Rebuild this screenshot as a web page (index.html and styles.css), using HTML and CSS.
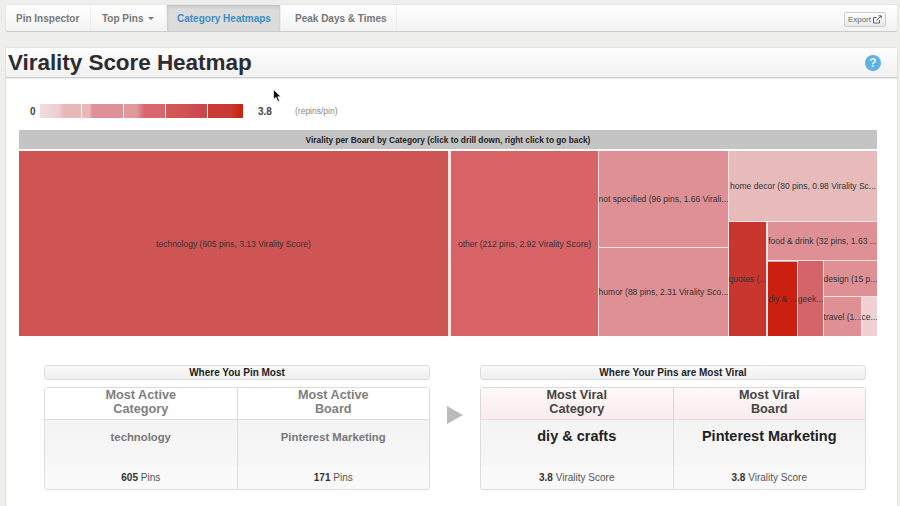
FILE: index.html
```html
<!DOCTYPE html>
<html lang="en">
<head>
  <meta charset="UTF-8" />
  <title>Virality Score Heatmap</title>
  <link rel="stylesheet" href="styles.css">
</head>
<body>
  <nav class="navbar">
    <a class="tab t-pin">Pin Inspector</a>
    <a class="tab t-top">Top Pins <span class="caret"></span></a>
    <a class="tab t-cat active">Category Heatmaps</a>
    <a class="tab t-peak">Peak Days &amp; Times</a>
    <button class="export">Export
      <svg width="9" height="9" viewBox="0 0 9 9" fill="none" stroke="#666" stroke-width="1">
        <path d="M6.500 5v3h-6V2.500h3" />
        <path d="M3.500 5.500L8 1M5.500 .8H8.300V3.500" />
      </svg>
    </button>
  </nav>

  <main class="panel">
    <header class="panel-head">
      <h1>Virality Score Heatmap</h1>
      <span class="help">?</span>
    </header>

    <div class="legend">
      <b class="legend-min">0</b>
      <div class="scale">
        <i class="s1"></i><i class="s2"></i><i class="s3"></i><i class="s4"></i><i class="s5"></i>
      </div>
      <b class="legend-max">3.8</b>
      <span class="legend-unit">(repins/pin)</span>
    </div>

    <div class="map-title">Virality per Board by Category (click to drill down, right click to go back)</div>

    <div class="treemap">
      <div class="cell c-tech">technology (605 pins, 3.13 Virality Score)</div>
      <div class="cell c-other">other (212 pins, 2.92 Virality Score)</div>
      <div class="col col-3">
        <div class="cell c-pale c-ns">not specified (96 pins, 1.66 Virali...</div>
        <div class="cell c-pale c-humor">humor (88 pins, 2.31 Virality Sco...</div>
      </div>
      <div class="col col-4">
        <div class="cell c-home">home decor (80 pins, 0.98 Virality Sc...</div>
        <div class="row r-lower">
          <div class="cell c-quotes">quotes (...</div>
          <div class="col col-5">
            <div class="cell c-pale c-food">food &amp; drink (32 pins, 1.63 ...</div>
            <div class="row r-small">
              <div class="cell c-diy">diy &amp; ...</div>
              <div class="cell c-geek">geek...</div>
              <div class="col col-6">
                <div class="cell c-pale c-design">design (15 p...</div>
                <div class="row r-tiny">
                  <div class="cell c-pale c-travel">travel (1...</div>
                  <div class="cell c-ce">ce...</div>
                </div>
              </div>
            </div>
          </div>
        </div>
      </div>
    </div>

    <div class="summary">
      <section class="group">
        <div class="group-title">Where You Pin Most</div>
        <div class="stats muted">
          <div class="stat">
            <div class="stat-head">Most Active<br>Category</div>
            <div class="stat-name">technology</div>
            <div class="stat-foot"><b>605</b> Pins</div>
          </div>
          <div class="stat">
            <div class="stat-head">Most Active<br>Board</div>
            <div class="stat-name">Pinterest Marketing</div>
            <div class="stat-foot"><b>171</b> Pins</div>
          </div>
        </div>
      </section>
      <div class="arrow"></div>
      <section class="group">
        <div class="group-title">Where Your Pins are Most Viral</div>
        <div class="stats viral">
          <div class="stat">
            <div class="stat-head">Most Viral<br>Category</div>
            <div class="stat-name">diy &amp; crafts</div>
            <div class="stat-foot"><b>3.8</b> Virality Score</div>
          </div>
          <div class="stat">
            <div class="stat-head">Most Viral<br>Board</div>
            <div class="stat-name">Pinterest Marketing</div>
            <div class="stat-foot"><b>3.8</b> Virality Score</div>
          </div>
        </div>
      </section>
    </div>
  </main>

  <svg class="cursor" width="9" height="14" viewBox="0 0 9 14">
    <path d="M.5 .5V10.500L3 8.300L4.800 12.500L6.500 11.700L4.800 7.800H8Z" fill="#111" stroke="#fff" stroke-width=".7" />
  </svg>
</body>
</html>
```

FILE: styles.css
```css
* {
  box-sizing: border-box;
}
html,
body {
  height: 506px;
  overflow: hidden;
}
body {
  margin: 0;
  padding: 4px 2px 0 5px;
  background-color: #eeeeec;
  font-family: "Liberation Sans", Arial, sans-serif;
  color: #333;
  position: relative;
}

/* top nav */
.navbar {
  display: flex;
  align-items: stretch;
  height: 28px;
  background: linear-gradient(#fff, #f2f2f2);
  border: 1px solid #e6e6e6;
  border-bottom-color: #ccc;
  border-radius: 3px;
}
.tab {
  display: flex;
  align-items: center;
  font-size: 10px;
  font-weight: bold;
  color: #777;
  border-right: 1px solid #eee;
}
.t-pin {
  width: 85px;
  padding-left: 10px;
}
.t-top {
  width: 76px;
  padding-left: 11px;
}
.t-cat {
  width: 114px;
  padding-left: 10px;
}
.t-peak {
  width: 116px;
  padding-left: 14px;
}
.tab.active {
  color: #3b8dc5;
  background: #dcdcdc;
  box-shadow: inset 0 2px 3px rgba(0, 0, 0, .12);
}
.caret {
  width: 0;
  height: 0;
  margin-left: 5px;
  border: 3px solid transparent;
  border-top-color: #777;
  border-bottom: 0;
}
.export {
  display: flex;
  align-items: center;
  gap: 2px;
  align-self: center;
  margin: 2px 11px 0 auto;
  height: 15px;
  padding: 0 3px;
  font: 8px "Liberation Sans", Arial, sans-serif;
  color: #666;
  background: linear-gradient(#fff, #e8e8e8);
  border: 1px solid #ccc;
  border-radius: 2px;
}

/* main panel */
.panel {
  margin-top: 15px;
  height: 470px;
  background: #fff;
  border: 1px solid #e4e4e4;
  border-radius: 3px 3px 0 0;
}
.panel-head {
  display: flex;
  align-items: center;
  justify-content: space-between;
  height: 30px;
  padding: 0 16px 0 2px;
  background: linear-gradient(#fff, #f0f0f0);
  border-bottom: 1px solid #ccc;
  box-shadow: 0 1px 1px rgba(0, 0, 0, .08);
}
h1 {
  margin: 0;
  font-size: 22.500px;
  letter-spacing: -.05px;
  color: #2c2c33;
}
.help {
  display: flex;
  align-items: center;
  justify-content: center;
  width: 16px;
  height: 16px;
  border-radius: 50%;
  background: #5fb0e3;
  color: #e8f4fb;
  font-size: 12px;
  font-weight: bold;
}

/* legend */
.legend {
  display: flex;
  align-items: center;
  height: 14px;
  margin: 26px 0 0 24px;
  font-size: 10px;
}
.legend-min {
  width: 10px;
  color: #444;
}
.scale {
  display: flex;
  gap: 1px;
  width: 203px;
  height: 14px;
}
.scale i {
  display: block;
  height: 100%;
  flex: 0 0 41px;
}
.scale .s1 {
  background: linear-gradient(90deg, #f0dcdf 0, #eecdd2 45%, #e6b8b8 60%);
}
.scale .s2 {
  background: linear-gradient(90deg, #e8b9b9 0, #e8b9b9 18%, #de9297 25%);
}
.scale .s3 {
  background: linear-gradient(90deg, #e09a9e 0, #e09a9e 30%, #d9666c 50%);
}
.scale .s4 {
  background: linear-gradient(90deg, #d25a5a 0, #d05252 50%, #c8454a 100%);
}
.scale .s5 {
  flex-basis: 35px;
  background: linear-gradient(90deg, #c83a34 0, #c83a34 65%, #cc2412 90%);
}
.legend-max {
  margin-left: 15px;
  width: 37px;
  color: #444;
}
.legend-unit {
  font-size: 8.500px;
  color: #888;
}

/* treemap */
.map-title {
  margin: 12px 0 0 13px;
  width: 858px;
  height: 19px;
  line-height: 20px;
  background: #c4c4c4;
  text-align: center;
  font-size: 8.300px;
  font-weight: bold;
  color: #222;
}
.treemap {
  display: flex;
  width: 858px;
  height: 185px;
  margin: 2px 0 0 13px;
  background: #f6e4e4;
}
.col,
.row {
  display: flex;
  min-width: 0;
}
.col {
  flex-direction: column;
}
.cell {
  display: flex;
  align-items: center;
  justify-content: center;
  min-width: 0;
  font-size: 8.500px;
  color: #333;
  white-space: nowrap;
}
.c-pale {
  background: #de9095;
}
.c-tech {
  flex: 0 0 429px;
  background: #ce5554;
}
.c-other {
  flex: 0 0 147px;
  margin-left: 3px;
  background: #d96468;
}
.col-3 {
  flex: 0 0 129px;
  margin-left: 1px;
}
.c-ns {
  height: 96px;
}
.c-humor {
  height: 88px;
  margin-top: 1px;
}
.col-4 {
  flex: 0 0 148px;
  margin-left: 1px;
}
.c-home {
  height: 70px;
  background: #e6bbba;
}
.r-lower {
  height: 114px;
  margin-top: 1px;
}
.c-quotes {
  flex: 0 0 37px;
  background: #c8362f;
}
.col-5 {
  flex: 0 0 109px;
  margin-left: 2px;
}
.c-food {
  height: 38px;
}
.r-small {
  height: 75px;
  margin-top: 1px;
}
.c-diy {
  flex: 0 0 29px;
  background: #cb2011;
  border-top: 1px solid #bbb;
}
.c-geek {
  flex: 0 0 25px;
  margin-left: 1px;
  background: #d5636a;
}
.col-6 {
  flex: 0 0 53px;
  margin-left: 1px;
}
.c-design {
  height: 35px;
}
.r-tiny {
  height: 39px;
  margin-top: 1px;
}
.c-travel {
  flex: 0 0 37px;
}
.c-ce {
  flex: 0 0 15px;
  margin-left: 1px;
  background: #f0d0d5;
}

/* summary boxes */
.summary {
  display: flex;
  margin: 29px 0 0 38px;
}
.group {
  width: 386px;
}
.group-title {
  height: 15px;
  line-height: 14px;
  text-align: center;
  font-size: 10px;
  font-weight: bold;
  color: #222;
  background: linear-gradient(#fafafa, #eee);
  border: 1px solid #ddd;
  border-radius: 3px;
}
.arrow {
  flex: 0 0 50px;
  padding: 41px 0 0 17px;
}
.arrow::after {
  content: "";
  display: block;
  width: 0;
  border-left: 16px solid #bbb;
  border-top: 9px solid transparent;
  border-bottom: 9px solid transparent;
}
.stats {
  display: flex;
  height: 103px;
  margin-top: 7px;
  border: 1px solid #ddd;
  border-radius: 3px;
  background: #f9f9f9;
}
.stat {
  flex: 1;
  text-align: center;
}
.stat + .stat {
  border-left: 1px solid #ddd;
}
.stat-head {
  height: 32px;
  font-size: 12.700px;
  line-height: 14px;
  font-weight: bold;
  background: #fff;
  border-bottom: 1px solid #ddd;
  box-shadow: 0 1px 2px rgba(0, 0, 0, .06);
}
.stat-name {
  height: 46px;
  padding-top: 11px;
  font-weight: bold;
  background: linear-gradient(#f4f4f4, #f7f7f7);
}
.stat-foot {
  padding-top: 5px;
  font-size: 10px;
  line-height: 14px;
  color: #555;
}
.stat-foot b {
  color: #333;
}
.muted .stat-head {
  color: #808080;
}
.muted .stat-name {
  font-size: 11.300px;
  color: #777;
}
.viral .stat-head {
  color: #444;
  background: linear-gradient(#fdf8f8, #fbecec);
}
.viral .stat-name {
  font-size: 14.500px;
  padding-top: 8px;
  color: #222;
}

/* mouse pointer caught in the capture */
.cursor {
  position: absolute;
  left: 273px;
  top: 89px;
}
```
